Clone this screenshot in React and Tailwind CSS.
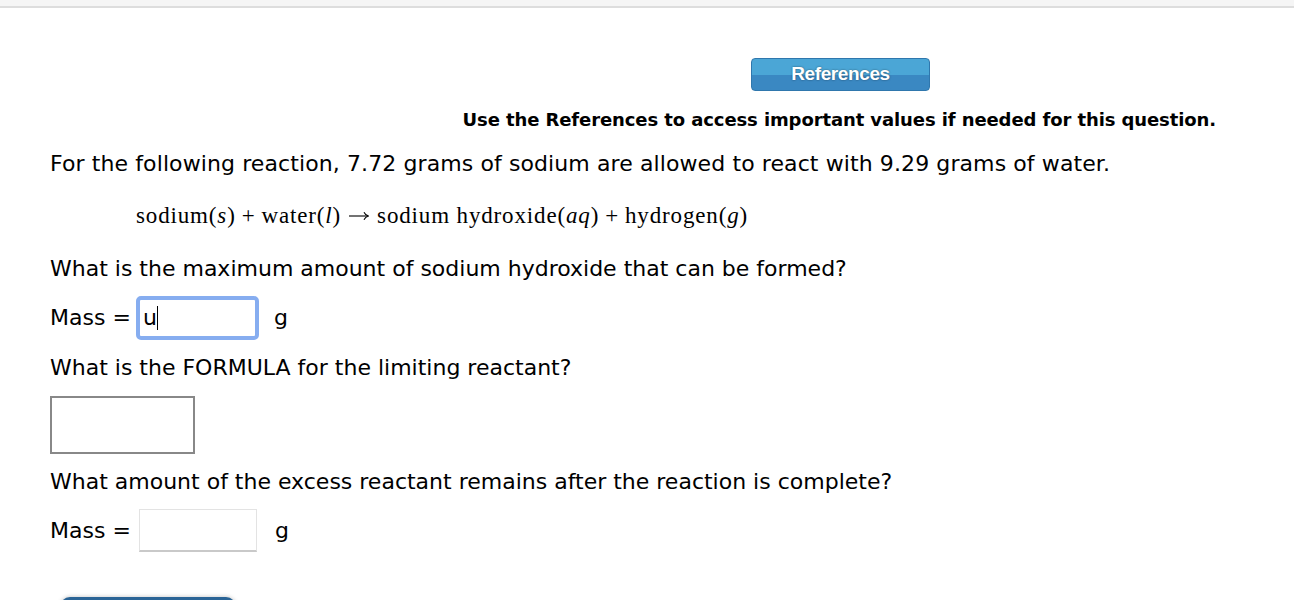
import React from 'react';

const sans = { fontFamily: '"DejaVu Sans", Verdana, sans-serif' };
const serif = { fontFamily: '"Liberation Serif", "Times New Roman", serif' };

const Arrow = () => (
  <svg width="22" height="12" viewBox="0 0 22 12" className="inline-block mx-[7px] align-[1px]" fill="none" stroke="black" strokeWidth="1.1">
    <path d="M1 6h19" />
    <path d="M16 2.2c.8 1.8 2.2 3.2 4.5 3.8-2.3.6-3.7 2-4.5 3.8" strokeLinejoin="round" />
  </svg>
);

const App = () => {
  return (
    <div className="w-[1294px] h-[600px] overflow-hidden bg-white text-black" style={sans}>
      <div className="h-[8px] bg-[#f5f5f5] border-b-2 border-[#dddddd]" />

      <div className="pl-[751px] pt-[50px]">
        <button
          className="w-[179px] h-[33px] rounded-[4px] border border-[#2f77ad] bg-gradient-to-b from-[#4ba6d6] from-50% to-[#3a88c2] to-50% text-white text-[19px] font-bold tracking-[-0.4px] [text-shadow:0_0_2px_rgba(0,0,0,0.5)]"
          style={{ fontFamily: '"Liberation Sans", Arial, sans-serif' }}
        >
          References
        </button>
      </div>
      <div className="flex justify-end pr-[78px]">
        <p className="mt-[18px] text-[18px] font-bold leading-[22px] tracking-[-0.1px]">
          Use the References to access important values if needed for this question.
        </p>
      </div>

      <div className="pl-[50px] text-[22px] leading-[26px]">
        <p className="mt-[20px] tracking-[0.1px]">
          For the following reaction, 7.72 grams of sodium are allowed to react with 9.29 grams of water.
        </p>

        <p className="mt-[26px] ml-[86px] text-[23px] leading-[26px] tracking-[0.85px]" style={serif}>
          sodium(<i>s</i>)<span className="mx-[6px]">+</span>water(<i>l</i>)
          <Arrow />
          sodium hydroxide(<i>aq</i>)<span className="mx-[6px]">+</span>hydrogen(<i>g</i>)
        </p>

        <p className="mt-[27px]">What is the maximum amount of sodium hydroxide that can be formed?</p>

        <div className="mt-[14px] flex items-center h-[44px]">
          <span className="w-[86px]">Mass =</span>
          <div className="w-[123px] h-[44px] rounded-[5px] border-[4px] border-[#86adf0] bg-white flex items-center pl-[3px]">
            <span>u</span>
            <span className="w-px h-[24px] bg-black" />
          </div>
          <span className="ml-[15px]">g</span>
        </div>

        <p className="mt-[15px]">What is the FORMULA for the limiting reactant?</p>

        <div className="mt-[15px] w-[145px] h-[58px] border-2 border-[#888888] bg-white" />

        <p className="mt-[15px]">What amount of the excess reactant remains after the reaction is complete?</p>

        <div className="mt-[14px] flex items-center h-[43px]">
          <span className="w-[89px]">Mass =</span>
          <div className="w-[118px] h-[43px] border border-[#e3e3e3] border-b-2 border-b-[#c9c9c9] bg-white" />
          <span className="ml-[18px]">g</span>
        </div>

        <div className="mt-[45px] ml-[10px] w-[176px] h-[30px] rounded-t-[10px] bg-[#2a6496] shadow-[0_0_4px_rgba(0,0,0,0.25)]" />
      </div>
    </div>
  );
};

export default App;
